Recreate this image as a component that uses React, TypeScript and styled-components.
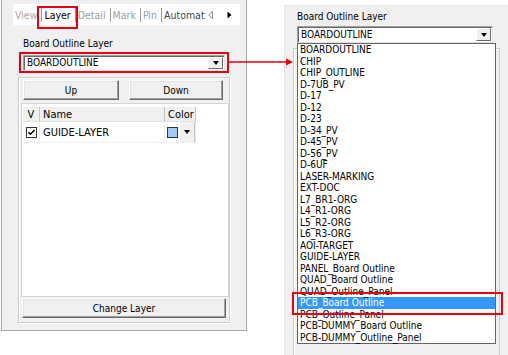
import React from "react";
import styled, { createGlobalStyle } from "styled-components";

const UI_FONT = `"DejaVu Sans Condensed", "Liberation Sans", Arial, sans-serif`;
const RED = "#e60012";

const GlobalStyle = createGlobalStyle`
  *, *::before, *::after { box-sizing: border-box; }
  html, body { margin: 0; padding: 0; background: #fff; }
  body { font-family: ${UI_FONT}; }
`;

const LAYERS = [
  "BOARDOUTLINE",
  "CHIP",
  "CHIP_OUTLINE",
  "D-7UB_PV",
  "D-17",
  "D-12",
  "D-23",
  "D-34_PV",
  "D-45_PV",
  "D-56_PV",
  "D-6UF",
  "LASER-MARKING",
  "EXT-DOC",
  "L7_BR1-ORG",
  "L4_R1-ORG",
  "L5_R2-ORG",
  "L6_R3-ORG",
  "AOI-TARGET",
  "GUIDE-LAYER",
  "PANEL_Board Outline",
  "QUAD_Board Outline",
  "QUAD_Outline_Panel",
  "PCB_Board Outline",
  "PCB_Outline_Panel",
  "PCB-DUMMY_Board Outline",
  "PCB-DUMMY_Outline_Panel",
];

const TABS = [
  { label: "View", tone: "#a8a8a8" },
  { label: "Layer", tone: "#000" },
  { label: "Detail", tone: "#a0a0a0" },
  { label: "Mark", tone: "#a0a0a0" },
  { label: "Pin", tone: "#a0a0a0" },
  { label: "Automat", tone: "#444" },
];

const Screen = styled.div`
  position: relative;
  width: 508px;
  height: 355px;
  display: flex;
  align-items: flex-start;
  background: #fff;
  overflow: hidden;
  font-family: ${UI_FONT};
  font-size: 10px;
  color: #000;
`;

/* ---------- left: property panel ---------- */

const LeftPanel = styled.div`
  margin-left: 1px;
  width: 246px;
  height: 331px;
  display: flex;
  flex-direction: column;
  background: #f0f0f0;
  border: 1px solid #a9a9a9;
  border-top: none;
`;

const TabStrip = styled.div`
  margin: 4px 0 0 11px;
  width: 227px;
  height: 21px;
  display: flex;
  align-items: center;
  background: #fff;
  font-size: 10.5px;
  white-space: nowrap;
`;

const TabList = styled.div`
  flex: 1;
  min-width: 0;
  height: 100%;
  display: flex;
  align-items: center;
  padding-left: 1px;
  overflow: hidden;
`;

const Tab = styled.span<{ $tone: string }>`
  padding: 0 3px 0 1px;
  color: ${(p) => p.$tone};
`;

const TabSep = styled.span`
  flex: none;
  width: 1px;
  height: 14px;
  margin: 0 1px;
  background: #9a9a9a;
`;

const TabScroll = styled.div`
  flex: none;
  width: 35px;
  display: flex;
  align-items: center;
  gap: 14px;
  padding-left: 3px;
`;

const FieldLabel = styled.div<{ $top: number }>`
  margin-top: ${(p) => p.$top}px;
  line-height: 12px;
  font-size: 10px;
`;

const LeftBody = styled.div`
  padding-left: 21px;
`;

const ComboBox = styled.div<{ $width: number; $height: number }>`
  position: relative;
  width: ${(p) => p.$width}px;
  height: ${(p) => p.$height}px;
  display: flex;
  align-items: center;
  background: #fff;
  border: 1px solid;
  border-color: #a0a0a0 #e3e3e3 #e3e3e3 #a0a0a0;
  box-shadow: inset 1px 1px 0 #696969;
  padding-left: 3px;
  font-size: 10px;
`;

const ComboText = styled.span`
  flex: 1;
  line-height: 12px;
`;

const DropButton = styled.span`
  align-self: stretch;
  width: 15px;
  margin: 1px 1px 1px 0;
  display: flex;
  align-items: center;
  justify-content: center;
  background: #f0f0f0;
  border: 1px solid;
  border-color: #fff #696969 #696969 #fff;
`;

const Caret = styled.span`
  width: 0;
  height: 0;
  border-left: 3.5px solid transparent;
  border-right: 3.5px solid transparent;
  border-top: 4px solid #000;
`;

const GroupBox = styled.div`
  margin: 6px 0 0 -5px;
  width: 212px;
  height: 246px;
  display: flex;
  flex-direction: column;
  padding: 2px 3px 3px 4px;
  border: 1px solid #cdcdcd;
  box-shadow: inset 1px 1px 0 #fff, 1px 1px 0 #fff;
`;

const ButtonRow = styled.div`
  display: flex;
  gap: 10px;
`;

const PushButton = styled.button<{ $width: number; $shift?: number }>`
  width: ${(p) => p.$width}px;
  height: 20px;
  margin-left: ${(p) => p.$shift ?? 0}px;
  padding: 0;
  background: #f0f0f0;
  border: 1px solid;
  border-color: #fff #696969 #696969 #fff;
  box-shadow: inset -1px -1px 0 #a0a0a0, inset 1px 1px 0 #e3e3e3;
  font-family: ${UI_FONT};
  font-size: 10px;
  color: #000;
`;

const GridFrame = styled.div`
  margin: 3px 0 1px -2px;
  width: 208px;
  height: 194px;
  padding: 3px 1px 0;
  background: #fff;
  border: 1px solid #d6d6d6;
  font-size: 11px;
`;

const GridRow = styled.div<{ $height: number }>`
  display: flex;
  height: ${(p) => p.$height}px;
`;

const HeadCell = styled.div<{ $width: number; $center?: boolean }>`
  width: ${(p) => p.$width}px;
  display: flex;
  align-items: center;
  justify-content: ${(p) => (p.$center ? "center" : "flex-start")};
  padding-left: ${(p) => (p.$center ? 0 : 3)}px;
  background: #f0f0f0;
  border-right: 1px solid #c4c4c4;
  border-bottom: 1px solid #e2e2e2;
`;

const BodyCell = styled.div<{ $width: number; $center?: boolean; $flush?: boolean }>`
  width: ${(p) => p.$width}px;
  display: flex;
  align-items: center;
  justify-content: ${(p) => (p.$center ? "center" : "flex-start")};
  padding-left: ${(p) => (p.$center || p.$flush ? 0 : 3)}px;
  border-right: 1px solid #ececec;
  border-bottom: 1px solid #f0f0f0;
`;

const Swatch = styled.span<{ $fill: string }>`
  width: 11px;
  height: 11px;
  margin-left: 2px;
  background: ${(p) => p.$fill};
  border: 1px solid #333;
`;

const CellDrop = styled.span`
  margin-left: auto;
  width: 15px;
  align-self: stretch;
  display: flex;
  align-items: center;
  justify-content: center;
  background: #f0f0f0;
  border-right: 1px solid #c4c4c4;
`;

/* ---------- right: opened dropdown ---------- */

const RightPanel = styled.div`
  margin: 5px 0 0 37px;
  width: 224px;
  height: 350px;
  display: flex;
  flex-direction: column;
  padding: 5px 0 0 12px;
  background: #f0f0f0;
  border-top: 1px solid #e6e6e6;
  border-left: 1px solid #e6e6e6;
`;

const GhostGroup = styled.div`
  flex: 1;
  margin: 5px 0 0 -4px;
  width: 207px;
  border: 1px solid #cdcdcd;
  border-bottom: none;
  box-shadow: inset 1px 1px 0 #fff;
`;

const ListPopup = styled.ul`
  position: absolute;
  top: 16px;
  left: -1px;
  z-index: 2;
  width: 199px;
  height: 301px;
  margin: 0;
  padding: 0;
  list-style: none;
  background: #fff;
  border: 1px solid #646464;
`;

const ListItem = styled.li<{ $selected?: boolean }>`
  height: 11.5px;
  line-height: 11.5px;
  padding-left: 2px;
  white-space: nowrap;
  font-size: 10px;
  color: ${(p) => (p.$selected ? "#fff" : "#000")};
  background: ${(p) => (p.$selected ? "#3399ff" : "transparent")};
`;

/* ---------- annotations ---------- */

const Mark = styled.div<{ $x: number; $y: number; $w: number; $h: number }>`
  position: absolute;
  left: ${(p) => p.$x}px;
  top: ${(p) => p.$y}px;
  width: ${(p) => p.$w}px;
  height: ${(p) => p.$h}px;
  border: 2px solid ${RED};
  z-index: 5;
  pointer-events: none;
`;

const ArrowSvg = styled.svg`
  position: absolute;
  left: 228px;
  top: 57px;
  z-index: 5;
`;

const CheckBox = () => (
  <svg width="11" height="11" viewBox="0 0 11 11">
    <rect x="0.5" y="0.5" width="10" height="10" fill="#fff" stroke="#333" />
    <path d="M2.5 5.2 L4.4 7.2 L8.5 3" fill="none" stroke="#000" strokeWidth="1.6" />
  </svg>
);

const ScrollArrow = ({ dir }: { dir: "left" | "right" }) =>
  dir === "left" ? (
    <svg width="5" height="8" viewBox="0 0 5 8">
      <path d="M4.5 0.5 L0.8 4 L4.5 7.5 Z" fill="#fff" stroke="#8c8c8c" strokeWidth="1" />
    </svg>
  ) : (
    <svg width="5" height="8" viewBox="0 0 5 8">
      <path d="M0.5 0.5 L4.5 4 L0.5 7.5 Z" fill="#000" />
    </svg>
  );

export default function App() {
  const selected = "PCB_Board Outline";
  return (
    <>
      <GlobalStyle />
      <Screen>
        <LeftPanel>
          <TabStrip>
            <TabList>
              {TABS.map((t, i) => (
                <React.Fragment key={t.label}>
                  {i > 0 && <TabSep />}
                  <Tab $tone={t.tone}>{t.label}</Tab>
                </React.Fragment>
              ))}
            </TabList>
            <TabScroll>
              <ScrollArrow dir="left" />
              <ScrollArrow dir="right" />
            </TabScroll>
          </TabStrip>

          <LeftBody>
            <FieldLabel $top={13}>Board Outline Layer</FieldLabel>
            <div style={{ height: 5 }} />
            <ComboBox $width={202} $height={16}>
              <ComboText>BOARDOUTLINE</ComboText>
              <DropButton>
                <Caret />
              </DropButton>
            </ComboBox>

            <GroupBox>
              <ButtonRow>
                <PushButton $width={96}>Up</PushButton>
                <PushButton $width={94}>Down</PushButton>
              </ButtonRow>
              <GridFrame>
                <GridRow $height={15}>
                  <HeadCell $width={17} $center>V</HeadCell>
                  <HeadCell $width={125}>Name</HeadCell>
                  <HeadCell $width={31}>Color</HeadCell>
                </GridRow>
                <GridRow $height={21}>
                  <BodyCell $width={17} $center>
                    <CheckBox />
                  </BodyCell>
                  <BodyCell $width={125}>GUIDE-LAYER</BodyCell>
                  <BodyCell $width={31} $flush>
                    <Swatch $fill="#a6caf0" />
                    <CellDrop>
                      <Caret />
                    </CellDrop>
                  </BodyCell>
                </GridRow>
              </GridFrame>
              <PushButton $width={204} $shift={-1}>
                Change Layer
              </PushButton>
            </GroupBox>
          </LeftBody>
        </LeftPanel>

        <RightPanel>
          <FieldLabel $top={0}>Board Outline Layer</FieldLabel>
          <div style={{ height: 3 }} />
          <ComboBox $width={196} $height={17}>
            <ComboText>BOARDOUTLINE</ComboText>
            <DropButton>
              <Caret />
            </DropButton>
            <ListPopup>
              {LAYERS.map((name) => (
                <ListItem key={name} $selected={name === selected}>
                  {name}
                </ListItem>
              ))}
            </ListPopup>
          </ComboBox>
          <GhostGroup />
        </RightPanel>

        <Mark $x={37} $y={6} $w={41} $h={23} />
        <Mark $x={19} $y={52} $w={210} $h={21} />
        <Mark $x={292} $y={292} $w={211} $h={23} />
        <ArrowSvg width="68" height="10" viewBox="0 0 68 10">
          <line x1="0" y1="5" x2="60" y2="5" stroke={RED} strokeWidth="1.6" />
          <path d="M58 1.5 L65 5 L58 8.5 Z" fill={RED} />
        </ArrowSvg>
      </Screen>
    </>
  );
}
